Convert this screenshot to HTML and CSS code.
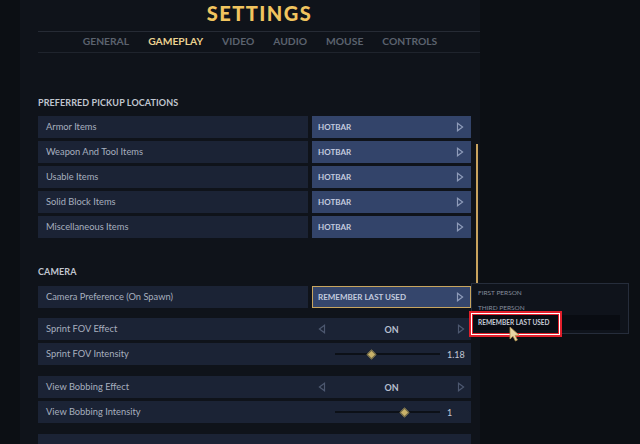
FILE: index.html
```html
<!DOCTYPE html>
<html lang="en">
<head>
    <meta charset="UTF-8">
    <meta name="viewport" content="width=device-width, initial-scale=1.0">
    <title>Settings - Gameplay</title>
    <link rel="stylesheet" href="styles.css">
</head>
<body>

    <div class="screen">
        <div class="panel">

            <header class="header">
                <h1 class="title">SETTINGS</h1>
                <nav class="tabs">
                    <span class="tab">GENERAL</span>
                    <span class="tab active">GAMEPLAY</span>
                    <span class="tab">VIDEO</span>
                    <span class="tab">AUDIO</span>
                    <span class="tab">MOUSE</span>
                    <span class="tab">CONTROLS</span>
                </nav>
            </header>

            <div class="body">
                <div class="options">

                    <section class="section">
                        <h2 class="section-title">PREFERRED PICKUP LOCATIONS</h2>
                        <div class="rows">
                            <div class="row">
                                <div class="label">Armor Items</div>
                                <div class="select"><span>HOTBAR</span><svg class="arrow" viewBox="0 0 8 10"><path d="M1.5 1.2 L6.6 5 L1.5 8.8 Z"/></svg></div>
                            </div>
                            <div class="row">
                                <div class="label">Weapon And Tool Items</div>
                                <div class="select"><span>HOTBAR</span><svg class="arrow" viewBox="0 0 8 10"><path d="M1.5 1.2 L6.6 5 L1.5 8.8 Z"/></svg></div>
                            </div>
                            <div class="row">
                                <div class="label">Usable Items</div>
                                <div class="select"><span>HOTBAR</span><svg class="arrow" viewBox="0 0 8 10"><path d="M1.5 1.2 L6.6 5 L1.5 8.8 Z"/></svg></div>
                            </div>
                            <div class="row">
                                <div class="label">Solid Block Items</div>
                                <div class="select"><span>HOTBAR</span><svg class="arrow" viewBox="0 0 8 10"><path d="M1.5 1.2 L6.6 5 L1.5 8.8 Z"/></svg></div>
                            </div>
                            <div class="row">
                                <div class="label">Miscellaneous Items</div>
                                <div class="select"><span>HOTBAR</span><svg class="arrow" viewBox="0 0 8 10"><path d="M1.5 1.2 L6.6 5 L1.5 8.8 Z"/></svg></div>
                            </div>
                        </div>
                    </section>

                    <section class="section camera">
                        <h2 class="section-title">CAMERA</h2>
                        <div class="rows">
                            <div class="row">
                                <div class="label">Camera Preference (On Spawn)</div>
                                <div class="select focused">
                                    <span>REMEMBER LAST USED</span>
                                    <svg class="arrow" viewBox="0 0 8 10"><path d="M1.5 1.2 L6.6 5 L1.5 8.8 Z"/></svg>
                                    <div class="dropdown">
                                        <div class="dropdown-item">FIRST PERSON</div>
                                        <div class="dropdown-item">THIRD PERSON</div>
                                        <div class="dropdown-item current">REMEMBER LAST USED</div>
                                        <div class="highlight"></div>
                                    </div>
                                </div>
                            </div>
                        </div>

                        <div class="rows">
                            <div class="row full">
                                <div class="label">Sprint FOV Effect</div>
                                <div class="toggle">
                                    <svg class="arrow dim" viewBox="0 0 8 10"><path d="M6.5 1.2 L1.4 5 L6.5 8.8 Z"/></svg>
                                    <span>ON</span>
                                    <svg class="arrow dim" viewBox="0 0 8 10"><path d="M1.5 1.2 L6.6 5 L1.5 8.8 Z"/></svg>
                                </div>
                            </div>
                            <div class="row full">
                                <div class="label">Sprint FOV Intensity</div>
                                <div class="slider">
                                    <div class="track"><div class="thumb" style="left: 35%"></div></div>
                                    <span class="value">1.18</span>
                                </div>
                            </div>
                        </div>

                        <div class="rows">
                            <div class="row full">
                                <div class="label">View Bobbing Effect</div>
                                <div class="toggle">
                                    <svg class="arrow dim" viewBox="0 0 8 10"><path d="M6.5 1.2 L1.4 5 L6.5 8.8 Z"/></svg>
                                    <span>ON</span>
                                    <svg class="arrow dim" viewBox="0 0 8 10"><path d="M1.5 1.2 L6.6 5 L1.5 8.8 Z"/></svg>
                                </div>
                            </div>
                            <div class="row full">
                                <div class="label">View Bobbing Intensity</div>
                                <div class="slider">
                                    <div class="track"><div class="thumb" style="left: 66.5%"></div></div>
                                    <span class="value">1</span>
                                </div>
                            </div>
                        </div>

                        <div class="rows">
                            <div class="row full"></div>
                        </div>
                    </section>

                </div>

                <div class="scrollbar"><div class="scroll-thumb"></div></div>
            </div>

        </div>

        <svg class="cursor" viewBox="0 0 12 16">
            <path d="M1 1 L1 13 L4 10.2 L6.4 15 L8.4 14 L6.1 9.4 L10.2 9.2 Z"/>
        </svg>
    </div>

</body>
</html>
```

FILE: styles.css
```css
* {
    margin: 0;
    padding: 0;
    box-sizing: border-box;
}

body {
    background: #0c0f14;
    font-family: "Lato", "Open Sans", sans-serif;
    color: #a9b1c2;
    overflow: hidden;
}

.screen {
    width: 640px;
    height: 444px;
    position: relative;
    overflow: hidden;
    background: #0c0f14;
}

.panel {
    width: 460px;
    height: 444px;
    margin-left: 20px;
    padding-left: 18px;
    background: #0f131a;
}

/* header */

.header {
    width: 442px;
}

.title {
    text-align: center;
    font-size: 20px;
    line-height: 26px;
    font-weight: 900;
    letter-spacing: 1.5px;
    color: #f1c45f;
    padding-left: 1px;
}

.tabs {
    margin-top: 5px;
    height: 22px;
    border-top: 1px solid #262b35;
    border-bottom: 1px solid #1f242d;
    display: flex;
    justify-content: center;
    align-items: center;
    gap: 19px;
    padding: 0 0 2px 2px;
}

.tab {
    font-size: 10.3px;
    font-weight: 700;
    color: #5b626e;
}

.tab.active {
    color: #ead190;
}

/* body */

.body {
    display: flex;
    gap: 5px;
}

.options {
    width: 433px;
    padding-top: 44px;
}

.section-title {
    font-size: 9px;
    line-height: 12px;
    font-weight: 700;
    color: #c0c6d0;
    margin-bottom: 7px;
    letter-spacing: 0.1px;
}

.camera {
    margin-top: 28px;
}

.camera .section-title {
    margin-bottom: 8px;
}

.rows {
    display: flex;
    flex-direction: column;
    gap: 3px;
}

.rows + .rows {
    margin-top: 10px;
}

.rows + .rows + .rows {
    margin-top: 11px;
}

.row {
    height: 22px;
    display: flex;
    gap: 4px;
}

.label {
    width: 270px;
    background: #1b2335;
    font-size: 9.3px;
    line-height: 22px;
    padding-left: 8px;
    color: #a7afbf;
}

.row.full {
    gap: 0;
    background: #1b2335;
}

.row.full .label {
    width: 274px;
    background: none;
}

.select {
    width: 159px;
    background: #33446a;
    display: flex;
    align-items: center;
    justify-content: space-between;
    padding: 0 7px 0 6px;
    font-size: 8px;
    font-weight: 700;
    color: #c4cbdf;
    position: relative;
}

.select.focused {
    border: 1px solid #c8a55f;
    background: #35466c;
    padding: 0 6px 0 5px;
}

.arrow {
    width: 8px;
    height: 10px;
    fill: none;
    stroke: #8f9cba;
    stroke-width: 1.2;
}

.arrow.dim {
    stroke: #4d5870;
}

.toggle {
    width: 159px;
    display: flex;
    align-items: center;
    justify-content: space-between;
    padding: 0 6px;
    font-size: 9px;
    font-weight: 700;
    color: #b8bfcf;
}

.slider {
    width: 159px;
    display: flex;
    align-items: center;
    padding-left: 23px;
    gap: 7px;
}

.track {
    width: 105px;
    height: 2px;
    background: #0c1017;
    position: relative;
}

.thumb {
    position: absolute;
    top: 50%;
    width: 7px;
    height: 7px;
    margin: -3.5px 0 0 -3.5px;
    transform: rotate(45deg);
    background: #c9b26a;
    border: 1.5px solid #6d6646;
}

.value {
    font-size: 9px;
    color: #c2c8d6;
}

/* dropdown menu */

.dropdown {
    position: absolute;
    left: calc(100% + 1px);
    top: -4px;
    width: 158px;
    padding: 1px 8px 3px 0;
    background: #0f131b;
    border: 1px solid #262d3b;
    z-index: 5;
}

.dropdown-item {
    height: 15px;
    line-height: 15px;
    padding-left: 6px;
    font-size: 6.5px;
    font-weight: 400;
    color: #858d9c;
}

.dropdown-item.current {
    background: #090c12;
    font-weight: 700;
    color: #c6cbd6;
}

.highlight {
    position: absolute;
    left: -3px;
    top: 27px;
    width: 93px;
    height: 26px;
    border: 2px solid #e21f2b;
    box-shadow: inset 0 0 0 1px #ffffff, inset 0 0 0 2px #e21f2b;
}

/* scrollbar */

.scrollbar {
    width: 2px;
}

.scroll-thumb {
    margin-top: 91px;
    height: 139px;
    background: #c9a35e;
}

.cursor {
    position: absolute;
    left: 509px;
    top: 326px;
    width: 12px;
    height: 16px;
    fill: #ead8a6;
    stroke: #b3924f;
    stroke-width: 0.8;
    z-index: 10;
}
```
